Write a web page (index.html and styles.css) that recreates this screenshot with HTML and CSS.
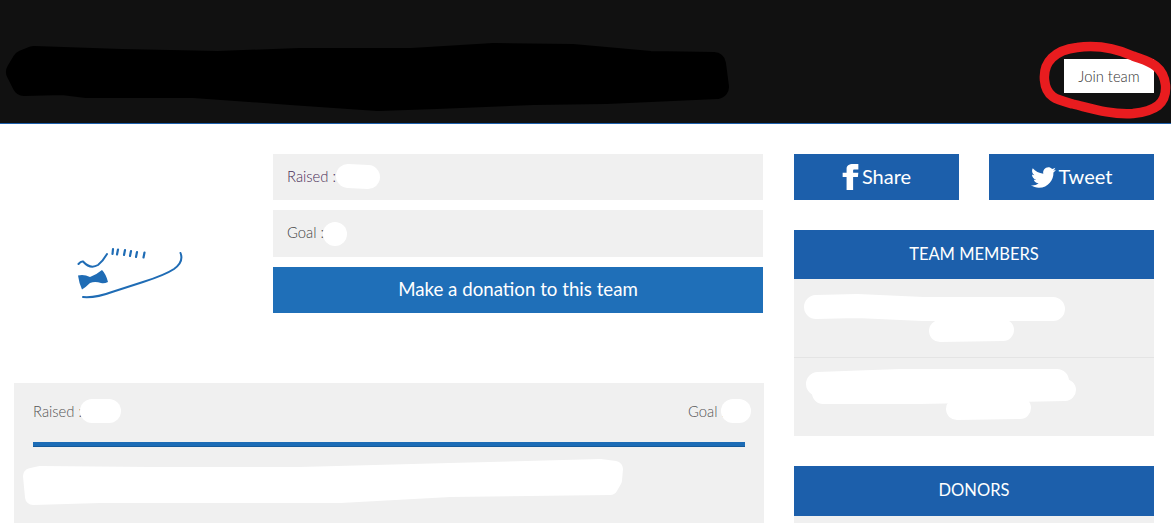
FILE: index.html
```html
<!DOCTYPE html>
<html lang="en">
<head>
<meta charset="utf-8">
<title>Team page</title>
<link rel="stylesheet" href="styles.css">
</head>
<body>
<div class="page">
  <header class="hero">
    <a class="join" href="#">Join team</a>
  </header>
  <main class="content">
    <section class="primary">
      <div class="summary">
        <div class="logo">
          <svg class="shoe" width="110" height="60" viewBox="75 245 110 60" fill="none" stroke="#1f6cb5" stroke-linecap="round">
            <path d="M78.500 264 Q81 261 83 261.500 C88 267 93 268 98 265 Q103 261 107 254" stroke-width="2"/>
            <path d="M113 249 L112.500 254 M118 249.500 L117 254.500 M125 250 L124 255 M131 251 L130 256 M137 252 L136 257 M144.500 252.500 L143.500 257.500" stroke-width="2.200"/>
            <path d="M78 275.500 Q84 274 90 277 Q96 275 102 270 Q106 274 108 282 Q104 284 101 283 Q95 281 90 283 Q86 287 82 289.500 Q79 283 78 275.500 Z" fill="#1f6cb5" stroke="none"/>
            <path d="M83 297 Q96 298 112 292 L143 282 Q165 275 174 269 Q184 262 180.500 253" stroke-width="2"/>
          </svg>
        </div>
        <div class="details">
          <div class="stat stat-raised">Raised :</div>
          <div class="stat stat-goal">Goal :</div>
          <a class="donate" href="#">Make a donation to this team</a>
        </div>
      </div>
      <div class="progress-card">
        <div class="progress-labels"><span>Raised :</span><span>Goal :</span></div>
        <div class="bar"></div>
      </div>
    </section>
    <aside class="sidebar">
      <div class="social">
        <a class="social-btn" href="#">
          <svg class="fb" width="17" height="26" viewBox="5.500 0 13 24" preserveAspectRatio="none" fill="#fff"><path d="M9 8H6v4h3v12h5V12h3.642L18 8h-4V6.333C14 5.378 14.192 5 15.115 5H18V0h-3.808C10.596 0 9 1.583 9 4.615V8z"/></svg>
          <span class="social-label">Share</span>
        </a>
        <a class="social-btn" href="#">
          <svg width="25" height="25" viewBox="0 0 24 24" fill="#fff"><path d="M24 4.557c-.883.392-1.832.656-2.828.775 1.017-.609 1.798-1.574 2.165-2.724-.951.564-2.005.974-3.127 1.195-.897-.957-2.178-1.555-3.594-1.555-3.179 0-5.515 2.966-4.797 6.045-4.091-.205-7.719-2.165-10.148-5.144-1.29 2.213-.669 5.108 1.523 6.574-.806-.026-1.566-.247-2.229-.616-.054 2.281 1.581 4.415 3.949 4.89-.693.188-1.452.232-2.224.084.626 1.956 2.444 3.379 4.6 3.419-2.07 1.623-4.678 2.348-7.29 2.04 2.179 1.397 4.768 2.212 7.548 2.212 9.142 0 14.307-7.721 13.995-14.646.962-.695 1.797-1.562 2.457-2.549z"/></svg>
          <span class="social-label">Tweet</span>
        </a>
      </div>
      <section class="box">
        <h2 class="box-title">TEAM MEMBERS</h2>
        <div class="member"></div>
        <div class="member"></div>
      </section>
      <section class="box">
        <h2 class="box-title box-title-donors">DONORS</h2>
        <div class="member"></div>
      </section>
    </aside>
  </main>
  <svg class="scribbles" width="1171" height="523" viewBox="0 0 1171 523" fill="none" stroke-linecap="round" stroke-linejoin="round">
    <polygon class="ink" points="34,58 121,61 218,63 300,60 412,60 494,55 572,56 650,63 714,64 717,87 606,92 533,93 436,97 378,99 291,93 194,86 87,86 63,83 24,84 18,72 24,62"/>
    <path class="red" d="M1044.500 80 C1043 62 1055 50 1077 47.500 C1095 45 1115 48 1133 56 C1145 61 1163 63 1165.500 85 C1167 104 1155 111 1133 113.500 C1110 115 1090 108 1073 104 C1058 100 1046 98 1044.500 80 Z"/>
    <g class="wipe">
      <path d="M348 176 L368 177" stroke-width="24"/>
      <circle cx="335" cy="234" r="12" fill="#fff" stroke="none"/>
      <path d="M92 411 L109 411" stroke-width="24"/>
      <path d="M733 411 L739 411" stroke-width="24"/>
      <polygon fill="#fff" stroke-width="16" points="31,476 40,474 150,475 300,475 450,471 600,467 615,469 614,480 610,487 450,489 340,495 100,495 33,497"/>
      <path d="M816 307 L857 306 L923 309 L1053 309" stroke-width="24"/>
      <path d="M940 331 L1003 330" stroke-width="22"/>
      <path d="M818 384 L900 381 L1057 381" stroke-width="24"/>
      <path d="M823 393 L920 393 L1065 390" stroke-width="22"/>
      <path d="M957 409 L1020 408" stroke-width="22"/>
    </g>
  </svg>
</div>
</body>
</html>
```
FILE: styles.css
```css
* { box-sizing: border-box; }
html, body { margin: 0; padding: 0; background: #fff; }
body { font-family: Lato, "Open Sans", sans-serif; font-weight: 300; color: #555; }
a { text-decoration: none; }
.page { position: relative; width: 1171px; height: 523px; overflow: hidden; }
.hero {
  height: 124px;
  background: #111;
  border-bottom: 1px solid #1c5fab;
  display: flex;
  justify-content: flex-end;
  align-items: flex-start;
  padding: 59px 17px 0 0;
}
.join {
  width: 90px;
  height: 34px;
  padding-bottom: 1px;
  background: #fff;
  color: #333;
  font-size: 14.800px;
  display: flex;
  align-items: center;
  justify-content: center;
}
.content {
  display: flex;
  gap: 30px;
  padding: 30px 17px 0 14px;
}
.primary { width: 750px; flex: none; }
.summary { display: flex; height: 229px; }
.logo { width: 259px; flex: none; padding: 91px 0 0 61px; }
.shoe { display: block; }
.details { width: 490px; display: flex; flex-direction: column; gap: 10px; }
.stat {
  height: 46px;
  padding: 0 0 2px 14px;
  background: #f0f0f0;
  display: flex;
  align-items: center;
  font-size: 14.800px;
  color: #444;
}
.stat-goal { height: 47px; padding-bottom: 3px; }
.stat-raised { color: #4b2f58; }
.donate {
  height: 46px;
  padding-bottom: 2px;
  background: #1f6fb8;
  color: #fff;
  font-size: 18.700px;
  font-weight: 400;
  display: flex;
  align-items: center;
  justify-content: center;
}
.progress-card {
  height: 160px;
  background: #f0f0f0;
  padding: 15px 19px 0;
}
.progress-labels {
  display: flex;
  justify-content: space-between;
  padding-right: 20px;
  font-size: 14.800px;
  line-height: 26px;
}
.bar {
  margin-top: 18px;
  height: 5px;
  background: #1c6cb6;
  border-bottom: 1px solid #155a9a;
}
.sidebar { width: 360px; flex: none; }
.social { display: flex; justify-content: space-between; margin-bottom: 30px; }
.social-btn {
  width: 165px;
  height: 46px;
  background: #1c5fab;
  color: #fff;
  font-size: 20px;
  font-weight: 400;
  display: flex;
  align-items: center;
  justify-content: center;
  gap: 3px;
}
.social-label { margin-bottom: 3px; }
.box { background: #f0f0f0; margin-bottom: 30px; }
.box-title {
  margin: 0;
  height: 49px;
  padding-bottom: 2px;
  background: #1c5fab;
  color: #fff;
  font-size: 16.500px;
  font-weight: 400;
  display: flex;
  align-items: center;
  justify-content: center;
}
.box-title-donors { height: 50px; padding-bottom: 3px; }
.member { height: 78px; }
.member + .member { height: 79px; border-top: 1px solid #e4e4e4; }
.scribbles { position: absolute; top: 0; left: 0; }
.ink { fill: #000; stroke: #000; stroke-width: 24; }
.red { stroke: #e91c1f; stroke-width: 9.500; }
.wipe { stroke: #fff; }
```
